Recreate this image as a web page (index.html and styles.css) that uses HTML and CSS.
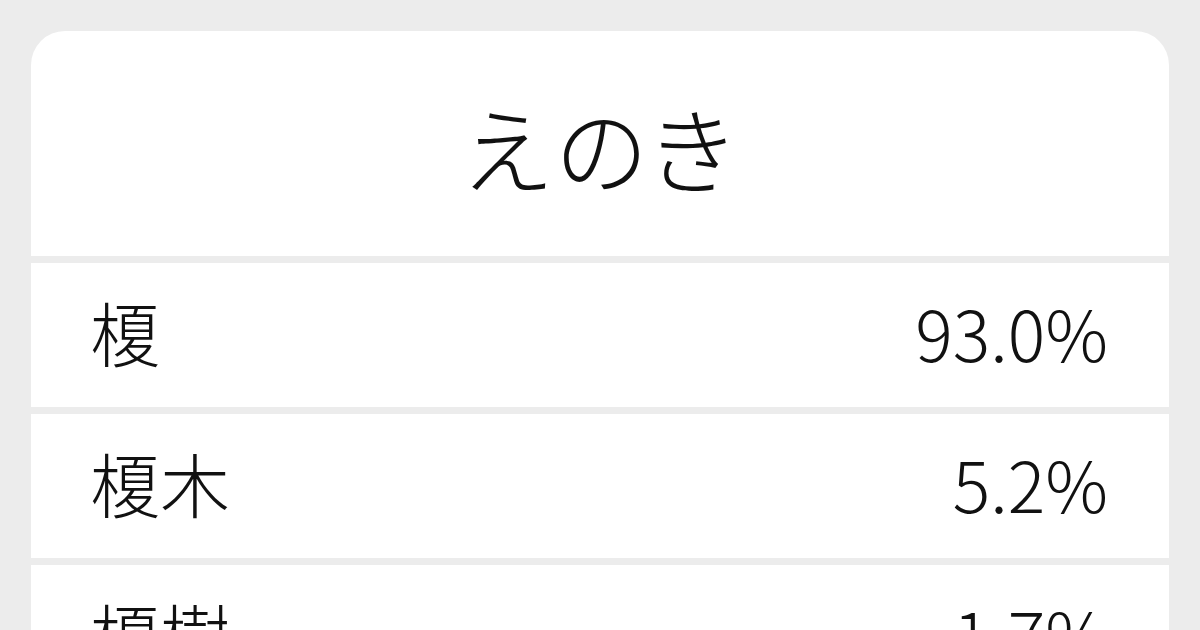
FILE: index.html
```html
<!DOCTYPE html>
<html lang="ja">
<head>
<meta charset="utf-8">
<link rel="stylesheet" href="styles.css">
</head>
<body>
<div class="card">
  <div class="title">えのき</div>
  <div class="row"><span class="word">榎</span><span class="pct">93.0%</span></div>
  <div class="row"><span class="word">榎木</span><span class="pct">5.2%</span></div>
  <div class="row"><span class="word">榎樹</span><span class="pct">1.7%</span></div>
</div>
</body>
</html>
```

FILE: styles.css
```css
html, body {
  margin: 0;
  padding: 0;
  background: #ececec;
  width: 1200px;
  height: 630px;
  overflow: hidden;
}
body {
  padding: 31px 31px 0 31px;
  box-sizing: border-box;
  font-family: "Noto Sans CJK JP", "Noto Sans", sans-serif;
  font-weight: 300;
  color: #111;
}
.card {
  display: flex;
  flex-direction: column;
  gap: 7px;
  border-radius: 34px 34px 0 0;
  overflow: hidden;
}
.title {
  background: #fff;
  height: 225px;
  box-sizing: border-box;
  padding-top: 4px;
  display: flex;
  align-items: center;
  justify-content: center;
  font-size: 94px;
  line-height: 1;
}
.row {
  background: #fff;
  height: 144px;
  box-sizing: border-box;
  flex: none;
  display: flex;
  align-items: center;
  justify-content: space-between;
  padding: 0 61px 6px 59px;
  font-size: 70px;
  line-height: 1;
}
```
